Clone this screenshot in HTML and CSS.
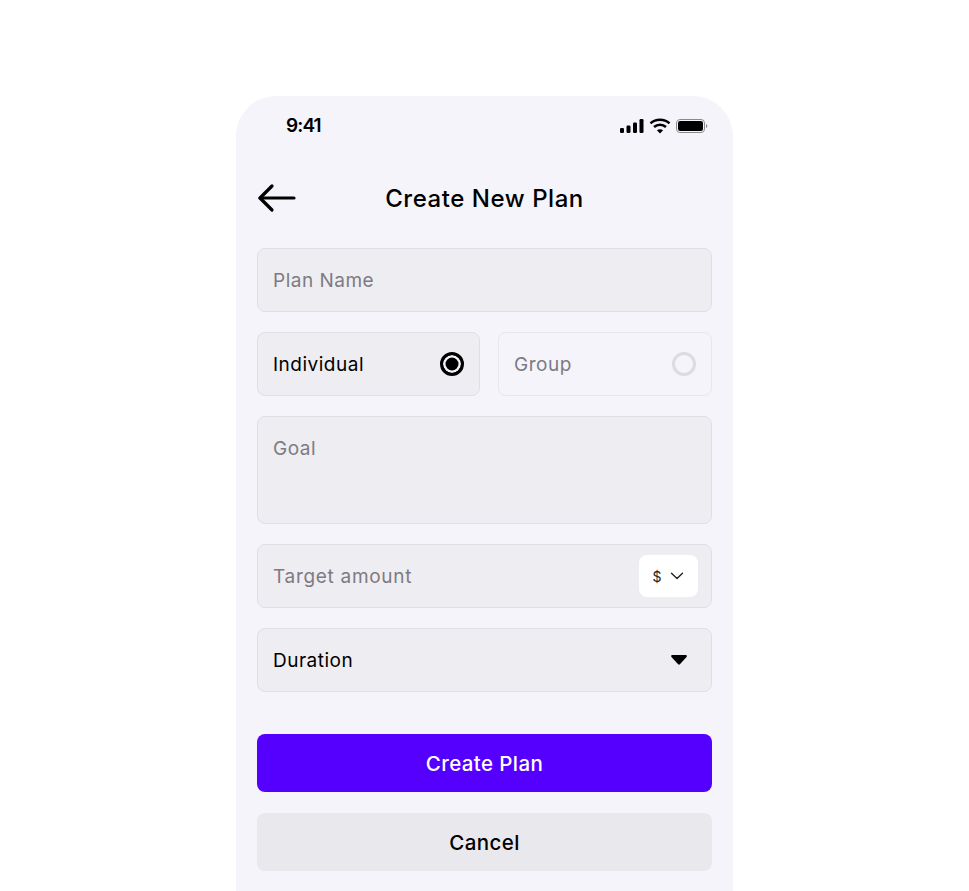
FILE: index.html
```html
<!DOCTYPE html>
<html lang="en">
    <head>
        <title>Create New Plan</title>
        <meta charset="utf-8" />
        <link rel="stylesheet" href="styles.css">
    </head>
    <body>
        <div class="phone">
            <div class="status-bar">
                <span class="time">9:41</span>
                <div class="status-icons">
                    <svg width="24" height="14" viewBox="0 0 24 14">
                        <rect x="0" y="9" width="4" height="5" rx="1.2" />
                        <rect x="6.5" y="6.5" width="4" height="7.5" rx="1.2" />
                        <rect x="13" y="3.5" width="4" height="10.5" rx="1.2" />
                        <rect x="19.5" y="0" width="4" height="14" rx="1.2" />
                    </svg>
                    <svg width="22" height="16" viewBox="0 0 22 16" fill="none" stroke="#000" stroke-width="2.6">
                        <path d="M1.500 5.400C6.800 .6 15.200 .6 20.500 5.400" />
                        <path d="M5 9c3.400-3 8.600-3 12 0" />
                        <path d="M11 15.600 7.900 12.300c1.800-1.500 4.400-1.500 6.200 0z" fill="#000" stroke="none" />
                    </svg>
                    <svg width="32" height="14" viewBox="0 0 32 14">
                        <rect x=".5" y=".5" width="28" height="13" rx="3.500" fill="none" stroke="#8a8a8e" />
                        <rect x="2" y="2" width="25" height="10" rx="2.200" />
                        <path d="M30 5v4c.8-.3 1.300-1 1.300-2s-.5-1.700-1.300-2z" fill="#8a8a8e" />
                    </svg>
                </div>
            </div>

            <div class="header">
                <svg class="back" width="40" height="32" viewBox="0 0 40 32" fill="none" stroke="#000" stroke-width="3.200" stroke-linecap="round" stroke-linejoin="round">
                    <path d="M37 16H3" />
                    <path d="M15 4 3 16l12 12" />
                </svg>
                <h1>Create New Plan</h1>
            </div>

            <form class="form">
                <div class="field placeholder">Plan Name</div>
                <div class="choice-row">
                    <div class="field choice selected">
                        Individual
                        <span class="radio on"></span>
                    </div>
                    <div class="field choice muted">
                        Group
                        <span class="radio"></span>
                    </div>
                </div>
                <div class="field placeholder goal">Goal</div>
                <div class="field placeholder amount">
                    Target amount
                    <span class="currency">
                        $
                        <svg width="14" height="8" viewBox="0 0 14 8" fill="none" stroke="#222" stroke-width="1.400" stroke-linecap="round" stroke-linejoin="round">
                            <path d="M1.500 1.200 7 6.500l5.500-5.300" />
                        </svg>
                    </span>
                </div>
                <div class="field duration">
                    Duration
                    <svg class="caret" width="16" height="10" viewBox="0 0 18 11">
                        <path d="M1.500 0h15c1.200 0 1.700 1.200 1 2L10 10.300c-.6.600-1.400.600-2 0L.5 2c-.7-.8-.2-2 1-2z" />
                    </svg>
                </div>
            </form>

            <div class="actions">
                <button class="btn primary" type="button">Create Plan</button>
                <button class="btn secondary" type="button">Cancel</button>
            </div>
        </div>
    </body>
</html>
```

FILE: styles.css
```css
* {
    padding: 0;
    margin: 0;
    box-sizing: border-box;
}
html,
body {
    height: 891px;
    overflow: hidden;
}
body {
    background-color: #fff;
    font-family: "Inter", "Liberation Sans", sans-serif;
    color: #000;
    -webkit-font-smoothing: antialiased;
}
.phone {
    width: 497px;
    height: 795px;
    margin: 96px auto 0;
    padding: 0 21px;
    background-color: #f5f4fa;
    border-radius: 40px 40px 0 0;
}

.status-bar {
    display: flex;
    align-items: center;
    justify-content: space-between;
    height: 58px;
    padding: 0 4px 0 29px;
}
.time {
    font-size: 19px;
    font-weight: 600;
    letter-spacing: -0.9px;
}
.status-icons {
    display: flex;
    align-items: center;
    gap: 5px;
    padding-top: 1px;
}

.header {
    display: grid;
    grid-template-columns: 1fr auto 1fr;
    align-items: center;
    height: 40px;
    margin-top: 24px;
    margin-bottom: 30px;
}
.header h1 {
    font-size: 24px;
    font-weight: 500;
    letter-spacing: 0.55px;
    grid-column: 2;
    grid-row: 1;
}
.back {
    grid-column: 1;
    grid-row: 1;
}

.form {
    display: flex;
    flex-direction: column;
    gap: 20px;
}
.field {
    display: flex;
    align-items: center;
    justify-content: space-between;
    height: 64px;
    padding: 0 15px;
    font-size: 19px;
    letter-spacing: 0.5px;
    background-color: #eeedf2;
    border: 1px solid #e0dfe5;
    border-radius: 8px;
}
.placeholder {
    color: #7d7b82;
}
.choice-row {
    display: flex;
    gap: 18px;
}
.choice.selected {
    width: 223px;
    color: #000;
}
.choice.muted {
    flex: 1;
    color: #7d7b82;
    background-color: #f5f4fa;
    border-color: #e8e7ed;
}
.radio {
    width: 24px;
    height: 24px;
    border: 3px solid #dcdbe0;
    border-radius: 50%;
}
.radio.on {
    border-color: #000;
    background-color: #000;
    box-shadow: inset 0 0 0 2.500px #f5f4fa;
}
.goal {
    align-items: flex-start;
    height: 108px;
    padding-top: 20px;
}
.amount {
    padding-right: 13px;
    letter-spacing: 0.7px;
}
.currency {
    display: flex;
    align-items: center;
    justify-content: center;
    gap: 9px;
    width: 59px;
    height: 42px;
    font-size: 14px;
    letter-spacing: 0;
    color: #222;
    background-color: #fff;
    border-radius: 8px;
}
.duration {
    color: #000;
    padding-right: 24px;
}

.actions {
    display: flex;
    flex-direction: column;
    gap: 21px;
    margin-top: 42px;
}
.btn {
    height: 58px;
    border: none;
    border-radius: 8px;
    font-family: inherit;
    font-size: 20.500px;
    font-weight: 500;
    letter-spacing: 0.4px;
}
.btn.primary {
    color: #fff;
    background-color: #5500ff;
}
.btn.secondary {
    color: #000;
    background-color: #e9e8ed;
}
```
